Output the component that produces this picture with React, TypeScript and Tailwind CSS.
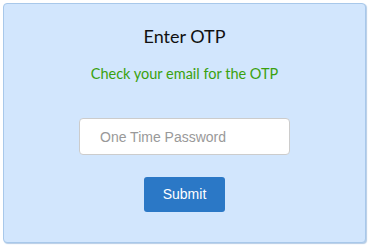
export default function App() {
  return (
    <div className="w-[369px] h-[246px] bg-white p-[3px]">
      <div className="h-[240px] w-[363px] rounded-[4px] border border-[#a8c8ea] bg-[#d2e6fd] shadow-[1px_1px_1px_#b6cde6] flex flex-col items-center">
        <h1 className="mt-[20px] text-[18px] leading-[24px] text-[#111] font-['Lato','Noto_Sans',sans-serif]">
          Enter OTP
        </h1>
        <p className="mt-[17px] text-[14.5px] leading-[18px] text-[#3aa10e] font-['Lato','Noto_Sans',sans-serif]">
          Check your email for the OTP
        </p>
        <input
          className="mt-[35px] h-[37px] w-[211px] rounded-[4px] border border-[#cccccc] bg-white pl-[20px] text-[14px] font-['Liberation_Sans',Arial,sans-serif] placeholder:text-[#999] outline-none"
          placeholder="One Time Password"
        />
        <button className="mt-[22px] h-[35px] w-[81px] rounded-[3px] bg-[#2b78c6] text-[14px] text-white font-['Liberation_Sans',Arial,sans-serif]">
          Submit
        </button>
      </div>
    </div>
  );
}
